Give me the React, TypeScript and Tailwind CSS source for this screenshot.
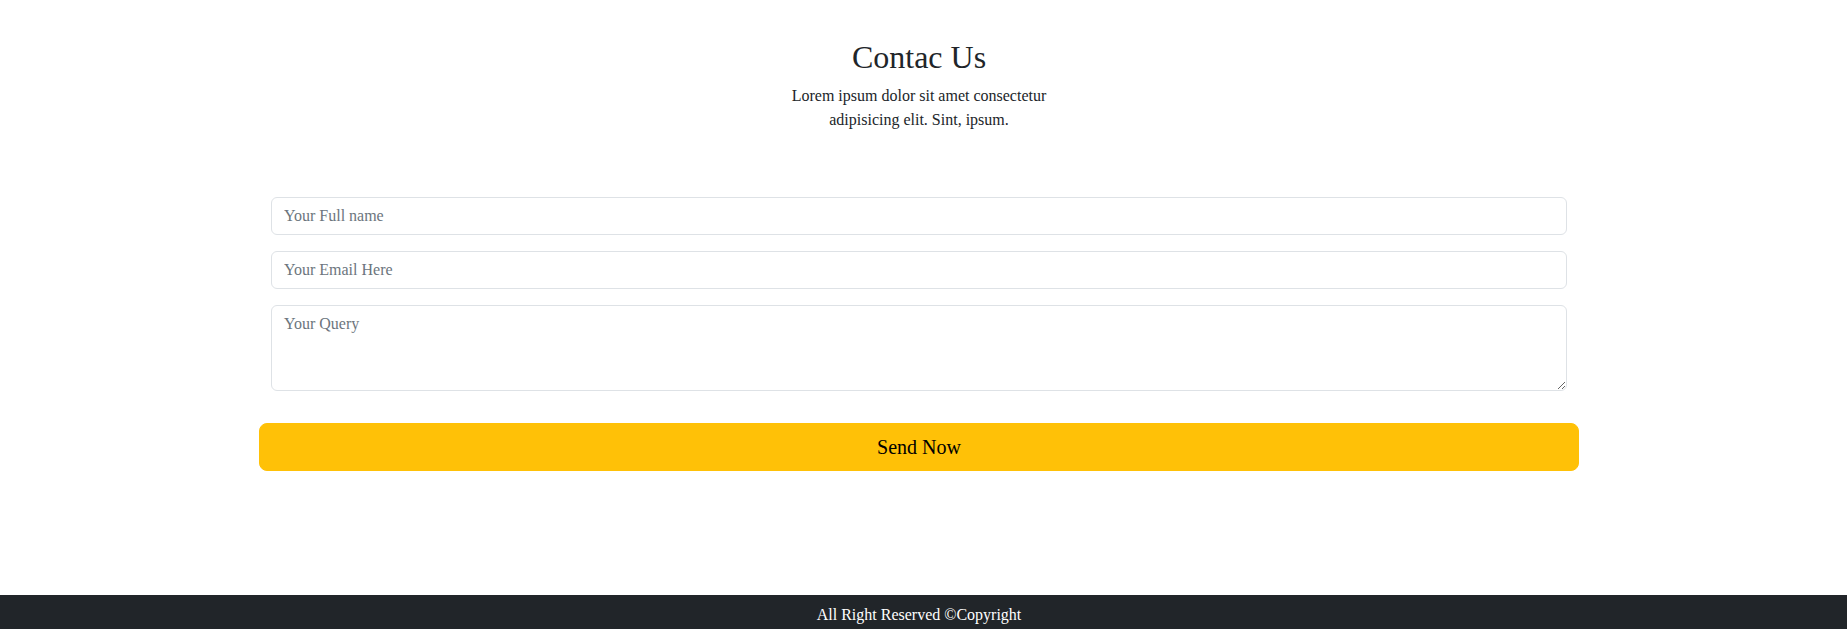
export default function App() {
  return (
    <div className="min-h-screen bg-white text-[#212529] font-['Liberation_Serif','Times_New_Roman',serif]">
      <section className="pr-[9px] pt-[38px] pb-[124px]">
        <div className="w-[1320px] mx-auto">
          <div className="flex flex-col items-center text-center">
            <h2 className="text-[32px] leading-[1.2] mb-2">Contac Us</h2>
            <p className="w-[280px] text-base leading-6 mb-4">
              Lorem ipsum dolor sit amet consectetur adipisicing elit. Sint, ipsum.
            </p>
          </div>
          <form className="mt-[49px]" onSubmit={(e) => e.preventDefault()}>
            <div className="px-3">
              <input
                type="text"
                placeholder="Your Full name"
                className="block w-full h-[38px] mb-4 px-3 py-[6px] text-base leading-6 border border-[#dee2e6] rounded-[6px] placeholder:text-[#6c757d] outline-none"
              />
              <input
                type="email"
                placeholder="Your Email Here"
                className="block w-full h-[38px] mb-4 px-3 py-[6px] text-base leading-6 border border-[#dee2e6] rounded-[6px] placeholder:text-[#6c757d] outline-none"
              />
              <textarea
                rows={3}
                placeholder="Your Query"
                className="block w-full h-[86px] px-3 py-[6px] text-base leading-6 border border-[#dee2e6] rounded-[6px] placeholder:text-[#6c757d] outline-none resize-y"
              />
            </div>
            <button
              type="submit"
              className="mt-8 block w-full h-12 px-4 py-2 text-xl leading-[1.5] text-black bg-[#ffc107] border border-[#ffc107] rounded-lg"
            >
              Send Now
            </button>
          </form>
        </div>
      </section>
      <footer className="bg-[#212529] text-white text-center py-2 pr-[9px]">
        <p className="text-base leading-6">All Right Reserved ©Copyright</p>
      </footer>
    </div>
  );
}
